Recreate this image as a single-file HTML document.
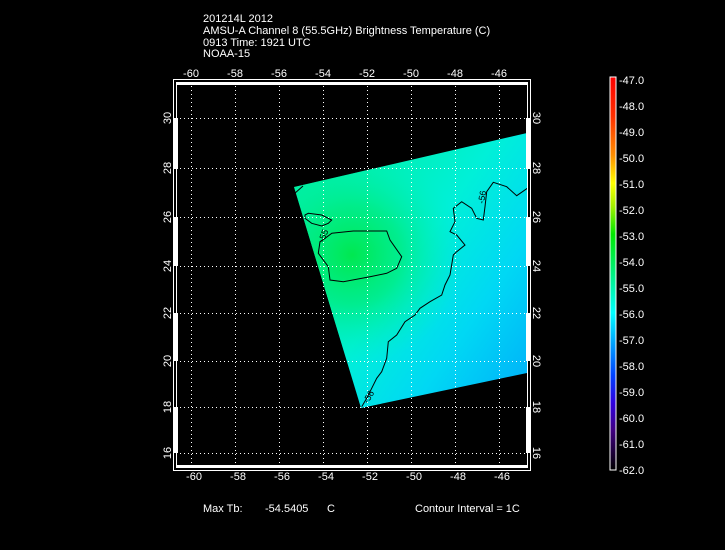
<!DOCTYPE html>
<html><head><meta charset="utf-8"><style>
html,body{margin:0;padding:0;background:#000;width:725px;height:550px;overflow:hidden}
svg{display:block}
text{font-family:"Liberation Sans",sans-serif;font-size:11px;fill:#fff}
</style></head><body>
<svg width="725" height="550" viewBox="0 0 725 550" xmlns="http://www.w3.org/2000/svg">
<defs>
<radialGradient id="g1" cx="352" cy="255" r="110" gradientUnits="userSpaceOnUse">
<stop offset="0" stop-color="#00e850"/><stop offset="0.45" stop-color="#00ec80" stop-opacity="0.8"/><stop offset="1" stop-color="#00f0c0" stop-opacity="0"/>
</radialGradient>
<linearGradient id="base" x1="300" y1="200" x2="530" y2="360" gradientUnits="userSpaceOnUse">
<stop offset="0" stop-color="#00f0a0"/><stop offset="0.45" stop-color="#00f0d8"/><stop offset="0.75" stop-color="#00d8f4"/><stop offset="1" stop-color="#00b8f8"/>
</linearGradient>
<linearGradient id="cb" x1="0" y1="77" x2="0" y2="470" gradientUnits="userSpaceOnUse">
<stop offset="0" stop-color="#ff0000"/><stop offset="0.1" stop-color="#ff3000"/><stop offset="0.2" stop-color="#ff9000"/><stop offset="0.27" stop-color="#ffff00"/><stop offset="0.33" stop-color="#a0f000"/><stop offset="0.4" stop-color="#00e800"/><stop offset="0.5" stop-color="#00f080"/><stop offset="0.6" stop-color="#00ffff"/><stop offset="0.68" stop-color="#00a0ff"/><stop offset="0.76" stop-color="#0040ff"/><stop offset="0.83" stop-color="#3000e0"/><stop offset="0.9" stop-color="#400080"/><stop offset="1" stop-color="#000000"/>
</linearGradient>
</defs>
<text x="203" y="22">201214L 2012</text>
<text x="203" y="34">AMSU-A Channel 8 (55.5GHz) Brightness Temperature (C)</text>
<text x="203" y="46">0913 Time: 1921 UTC</text>
<text x="203" y="57">NOAA-15</text>
<polygon points="294,187 527,133 527,373 361,408" fill="url(#base)"/>
<polygon points="294,187 527,133 527,373 361,408" fill="url(#g1)"/>
<g fill="none" stroke="#000" stroke-width="1">
<polyline points="361.7,406.7 366.7,398.3 371.7,388.3 376.7,378.3 381.7,371.7 386.7,358.3 388.3,341.7 396.7,335 405,321.7 415,315 420,308.3 430,301.7 441.7,295 445,285 450,275 453.3,255 456.7,251.7 465,245 456.7,235 450,231.7 455,221.7 453.3,208.3 461.7,201.7 471.7,208.3 476.7,218.3 483.3,220 485,206.7 486.7,191.7 493.3,182.3 506.7,186.7 516.7,195.7 527.3,188.3"/>
<polygon points="331.7,233.3 353.3,231 386.7,231 390,240 401.7,256.7 396.7,268.3 386.7,273.3 370,276.7 343.3,281.7 330,280 328.3,266.7 318.3,253.3 320,241.7 325,238.3"/>
<polygon points="305,215 308.3,213.3 321.7,215 331.7,220 328.3,223.3 321.7,226 311.7,223.3 305,218.3"/>
<line x1="294" y1="194" x2="303" y2="186"/>
</g>
<text transform="translate(324,243) rotate(-70)" style="fill:#000;font-size:9px">-55</text>
<text transform="translate(484,204) rotate(-80)" style="fill:#000;font-size:9px">-56</text>
<text transform="translate(368,404) rotate(-60)" style="fill:#000;font-size:9px">-56</text>
<g stroke="#fff" stroke-width="1" stroke-dasharray="1,3">
<line x1="191.5" y1="82" x2="191.5" y2="467"/><line x1="235.5" y1="82" x2="235.5" y2="467"/><line x1="279.5" y1="82" x2="279.5" y2="467"/><line x1="323.5" y1="82" x2="323.5" y2="467"/><line x1="367.5" y1="82" x2="367.5" y2="467"/><line x1="411.5" y1="82" x2="411.5" y2="467"/><line x1="455.5" y1="82" x2="455.5" y2="467"/><line x1="499.5" y1="82" x2="499.5" y2="467"/>
<line x1="176" y1="118.5" x2="527" y2="118.5"/><line x1="176" y1="168.5" x2="527" y2="168.5"/><line x1="176" y1="217.5" x2="527" y2="217.5"/><line x1="176" y1="266.5" x2="527" y2="266.5"/><line x1="176" y1="313.5" x2="527" y2="313.5"/><line x1="176" y1="361.5" x2="527" y2="361.5"/><line x1="176" y1="407.5" x2="527" y2="407.5"/><line x1="176" y1="453.5" x2="527" y2="453.5"/>
</g>
<rect x="173.5" y="79.5" width="357" height="391" fill="none" stroke="#fff"/>
<rect x="176.5" y="82.5" width="351" height="385" fill="none" stroke="#fff"/>
<g fill="#fff">
<rect x="176" y="82" width="352" height="3"/>
<rect x="176" y="465" width="352" height="3"/>
<rect x="174" y="118" width="4" height="51"/><rect x="174" y="217" width="4" height="49"/><rect x="174" y="313" width="4" height="48"/><rect x="174" y="407" width="4" height="46"/>
<rect x="526" y="118" width="4" height="51"/><rect x="526" y="217" width="4" height="49"/><rect x="526" y="313" width="4" height="48"/><rect x="526" y="407" width="4" height="46"/>
</g>
<g text-anchor="middle">
<text x="191" y="77">-60</text><text x="235" y="77">-58</text><text x="279" y="77">-56</text><text x="323" y="77">-54</text><text x="367" y="77">-52</text><text x="411" y="77">-50</text><text x="455" y="77">-48</text><text x="499" y="77">-46</text>
<text x="194" y="480">-60</text><text x="238" y="480">-58</text><text x="282" y="480">-56</text><text x="326" y="480">-54</text><text x="370" y="480">-52</text><text x="414" y="480">-50</text><text x="458" y="480">-48</text><text x="502" y="480">-46</text>
<text transform="translate(171,118) rotate(-90)">30</text><text transform="translate(171,168) rotate(-90)">28</text><text transform="translate(171,217) rotate(-90)">26</text><text transform="translate(171,266) rotate(-90)">24</text><text transform="translate(171,313) rotate(-90)">22</text><text transform="translate(171,361) rotate(-90)">20</text><text transform="translate(171,407) rotate(-90)">18</text><text transform="translate(171,453) rotate(-90)">16</text>
<text transform="translate(533,118) rotate(90)">30</text><text transform="translate(533,168) rotate(90)">28</text><text transform="translate(533,217) rotate(90)">26</text><text transform="translate(533,266) rotate(90)">24</text><text transform="translate(533,313) rotate(90)">22</text><text transform="translate(533,361) rotate(90)">20</text><text transform="translate(533,407) rotate(90)">18</text><text transform="translate(533,453) rotate(90)">16</text>
</g>
<rect x="610" y="77" width="6" height="393" fill="url(#cb)" stroke="#fff" stroke-width="1"/>
<g>
<text x="619" y="84">-47.0</text><text x="619" y="110">-48.0</text><text x="619" y="136">-49.0</text><text x="619" y="162">-50.0</text><text x="619" y="188">-51.0</text><text x="619" y="214">-52.0</text><text x="619" y="240">-53.0</text><text x="619" y="266">-54.0</text><text x="619" y="292">-55.0</text><text x="619" y="318">-56.0</text><text x="619" y="344">-57.0</text><text x="619" y="370">-58.0</text><text x="619" y="396">-59.0</text><text x="619" y="422">-60.0</text><text x="619" y="448">-61.0</text><text x="619" y="474">-62.0</text>
</g>
<text x="203" y="512">Max Tb:</text>
<text x="265" y="512">-54.5405</text>
<text x="327" y="512">C</text>
<text x="415" y="512">Contour Interval = 1C</text>
</svg>
</body></html>
